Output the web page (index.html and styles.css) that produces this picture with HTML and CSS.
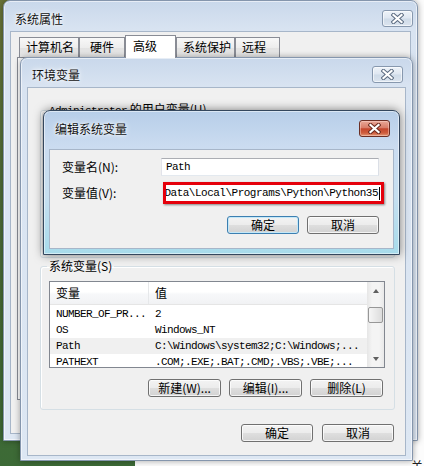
FILE: index.html
```html
<!DOCTYPE html>
<html lang="zh-CN">
<head>
<meta charset="utf-8">
<title>编辑系统变量</title>
<link rel="stylesheet" href="styles.css">
</head>
<body>
<div class="desktop">
  <div class="explorer"><span class="frag">关</span></div>

  <section class="win win-sys">
    <header class="titlebar">
      <span class="title">系统属性</span>
      <span class="close"><svg width="13" height="11" viewBox="0 0 13 11"><path d="M2.5 2 L10.5 9 M10.5 2 L2.5 9" stroke="#5b6b80" stroke-width="4.2" stroke-linecap="square"/><path d="M2.5 2 L10.5 9 M10.5 2 L2.5 9" stroke="#fff" stroke-width="2.2" stroke-linecap="square"/></svg></span>
    </header>
    <div class="client sys-client">
      <div class="tabs">
        <span class="tab t1">计算机名</span>
        <span class="tab t2">硬件</span>
        <span class="tab t3 selected">高级</span>
        <span class="tab t4">系统保护</span>
        <span class="tab t5">远程</span>
      </div>
      <div class="tabpanel"></div>
    </div>
  </section>

  <section class="win win-env">
    <header class="titlebar">
      <span class="title">环境变量</span>
      <span class="close"><svg width="13" height="11" viewBox="0 0 13 11"><path d="M2.5 2 L10.5 9 M10.5 2 L2.5 9" stroke="#5b6b80" stroke-width="4.2" stroke-linecap="square"/><path d="M2.5 2 L10.5 9 M10.5 2 L2.5 9" stroke="#fff" stroke-width="2.2" stroke-linecap="square"/></svg></span>
    </header>
    <div class="client env-client">
      <fieldset class="group group-user"><legend><span class="mono">Administrator</span> 的用户变量(U)</legend></fieldset>
      <fieldset class="group group-sys">
        <legend>系统变量(S)</legend>
        <div class="listbox">
          <div class="lv">
            <div class="lv-head"><span class="c1">变量</span><span class="c2">值</span></div>
            <div class="lv-rows">
              <div class="lv-row"><span class="c1 mono">NUMBER_OF_PR...</span><span class="c2 mono">2</span></div>
              <div class="lv-row"><span class="c1 mono">OS</span><span class="c2 mono">Windows_NT</span></div>
              <div class="lv-row hot"><span class="c1 mono">Path</span><span class="c2 mono">C:\Windows\system32;C:\Windows;...</span></div>
              <div class="lv-row"><span class="c1 mono">PATHEXT</span><span class="c2 mono">.COM;.EXE;.BAT;.CMD;.VBS;.VBE;...</span></div>
            </div>
          </div>
          <div class="vscroll">
            <span class="sb-btn"><i class="tri up"></i></span>
            <span class="sb-track"><span class="thumb"></span></span>
            <span class="sb-btn"><i class="tri down"></i></span>
          </div>
        </div>
        <div class="btnrow group-btns">
          <button class="btn">新建(W)...</button>
          <button class="btn">编辑(I)...</button>
          <button class="btn">删除(L)</button>
        </div>
      </fieldset>
      <div class="btnrow env-btns">
        <button class="btn">确定</button>
        <button class="btn">取消</button>
      </div>
    </div>
  </section>

  <section class="win win-edit">
    <header class="titlebar">
      <span class="title">编辑系统变量</span>
      <span class="close close-active"><svg width="13" height="11" viewBox="0 0 13 11"><path d="M2.5 2 L10.5 9 M10.5 2 L2.5 9" stroke="#6b2a1e" stroke-width="4.2" stroke-linecap="square"/><path d="M2.5 2 L10.5 9 M10.5 2 L2.5 9" stroke="#fff" stroke-width="2.2" stroke-linecap="square"/></svg></span>
    </header>
    <div class="client edit-client">
      <div class="field">
        <label>变量名(N):</label>
        <div class="textbox mono">Path</div>
      </div>
      <div class="field">
        <label>变量值(V):</label>
        <div class="redmark">
          <div class="textbox val mono"><span>Data\Local\Programs\Python\Python35</span><i class="caret"></i></div>
        </div>
      </div>
      <div class="btnrow edit-btns">
        <button class="btn btn-default">确定</button>
        <button class="btn">取消</button>
      </div>
    </div>
  </section>
</div>
</body>
</html>
```

FILE: styles.css
```css
* { box-sizing: border-box; }
html, body { margin: 0; padding: 0; }
body {
  width: 424px; height: 466px; overflow: hidden;
  font-family: "Noto Sans CJK SC", "Noto Sans", sans-serif;
  font-size: 12px; color: #000; background: #3e6a36;
}
.desktop {
  position: relative; width: 424px; height: 466px; overflow: hidden;
  background: linear-gradient(180deg, #6a7438 0%, #4f6d37 40%, #3c6a36 100%);
}
.explorer { position: absolute; left: 135px; top: 0; right: 0; bottom: 0; background: #fcfcfc; }
.frag { position: absolute; right: 1px; bottom: -8px; font-size: 12px; line-height: 16px; color: #222; }
.mono { font-family: "Liberation Mono", "DejaVu Sans Mono", monospace; font-size: 11px; letter-spacing: -0.6px; }

/* windows */
.win {
  position: absolute; display: flex; flex-direction: column;
  border: 1px solid #8596ad; border-radius: 7px 7px 0 0;
  background: linear-gradient(180deg, #c9d8eb 0, #d8e3f1 28px, #dde7f3 100%);
  box-shadow: 0 0 6px rgba(0,0,0,.35), inset 0 0 0 1px rgba(255,255,255,.55);
}
.titlebar { display: flex; align-items: flex-start; justify-content: space-between; flex: none; }
.title { line-height: 16px; font-size: 12px; color: #111; text-shadow: 0 0 6px #fff, 0 0 3px #fff; }
.close {
  width: 31px; height: 17px; margin-top: -1px; display: flex; align-items: center; justify-content: center;
  border: 1px solid #8798ae; border-radius: 3px;
  background: linear-gradient(180deg, #eef3f9 0%, #dfe7f1 48%, #cfdbe8 52%, #dbe4ef 100%);
  box-shadow: inset 0 0 0 1px rgba(255,255,255,.6);
}
.close-active {
  border-color: #6b2e24;
  background: linear-gradient(180deg, #e9a898 0%, #d97d69 45%, #c4462d 52%, #cf5d3d 80%, #e49a78 100%);
  box-shadow: inset 0 0 0 1px rgba(255,220,210,.45);
}
.client { flex: 1; background: #f0f0f0; box-shadow: 0 0 0 1px #a7b6c9; display: flex; flex-direction: column; }

/* system properties */
.win-sys { left: 3px; top: 0; width: 415px; height: 441px; }
.win-sys .titlebar { height: 31px; padding: 10px 4px 0 11px; }
.sys-client { margin: 0 7px 7px; padding: 3px 6px 33px 6px; }
.tabs { display: flex; align-items: flex-end; height: 22px; margin-left: 2px; flex: none; }
.tab {
  height: 20px; border: 1px solid #898c95; border-bottom: none; padding-left: 6px; line-height: 18px;
  background: linear-gradient(180deg, #f8f8f8 0%, #ededed 50%, #e2e2e2 52%, #e9e9e9 100%);
  white-space: nowrap;
}
.t1 { width: 60px; }
.t2 { width: 46px; padding-left: 10px; }
.t3 { width: 51px; padding-left: 7px; }
.t4 { width: 59px; }
.t5 { width: 45px; }
.tab.selected { height: 23px; margin-bottom: -1px; background: #fff; position: relative; z-index: 1; padding-top: 1px; }
.tabpanel { flex: 1; border: 1px solid #898c95; background: #fff; }

/* environment variables */
.win-env { left: 20px; top: 57px; width: 393px; height: 404px; }
.win-env .titlebar { height: 30px; padding: 9px 9px 0 11px; }
.env-client { margin: 0 7px 5px; padding: 13px 10px 0 12px; }

.group {
  margin: 0; min-width: 0; border: 1px solid #d5dfe5; border-radius: 3px;
  padding: 0 9px 12px 8px; box-shadow: inset 1px 1px 0 #fff;
}
.group legend { padding: 0 2px; margin-left: -2px; line-height: 16px; }
.group-user { height: 157px; flex: none; }
.group-sys { padding-top: 7px; flex: none; }

.listbox { display: flex; height: 87px; border: 1px solid #828790; background: #fff; overflow: hidden; }
.lv { flex: 1; min-width: 0; display: flex; flex-direction: column; }
.lv-head {
  display: flex; height: 23px; flex: none; align-items: stretch;
  border-bottom: 1px solid #e5e5e5;
  background: linear-gradient(180deg, #fff 0%, #fff 45%, #f7f8fa 55%, #f1f2f4 100%);
}
.lv-head span { display: flex; align-items: center; line-height: 16px; }
.c1 { width: 99px; flex: none; padding-left: 6px; overflow: hidden; white-space: nowrap; }
.c2 { flex: 1; min-width: 0; padding-left: 6px; overflow: hidden; white-space: nowrap; }
.lv-head .c1 { border-right: 1px solid #e6e8ea; }
.lv-rows { padding-top: 1px; }
.lv-row { display: flex; height: 16px; line-height: 16px; }
.lv-row.hot { background: #f0f0f0; }

.vscroll {
  width: 17px; flex: none; display: flex; flex-direction: column;
  background: linear-gradient(90deg, #e6e6e6, #f4f4f4 30%, #f4f4f4 70%, #e9e9e9);
}
.sb-btn { height: 17px; flex: none; display: flex; align-items: center; justify-content: center; }
.sb-track { flex: 1; padding-top: 8px; display: flex; flex-direction: column; align-items: center; }
.thumb {
  display: block; width: 15px; height: 16px; border: 1px solid #979797; border-radius: 2px;
  background: linear-gradient(90deg, #f6f6f6, #e9e9e9 50%, #dcdcdc);
}
.tri { display: block; width: 0; height: 0; border-left: 3.5px solid transparent; border-right: 3.5px solid transparent; }
.tri.up { border-bottom: 4px solid #606060; }
.tri.down { border-top: 4px solid #606060; }

.btnrow { display: flex; justify-content: flex-end; flex: none; }
.btn {
  width: 73px; height: 18px; padding: 0; margin: 0;
  border: 1px solid #707070; border-radius: 3px;
  background: linear-gradient(180deg, #f3f3f3 0%, #ececec 48%, #dedede 52%, #d2d2d2 100%);
  box-shadow: inset 0 0 0 1px rgba(255,255,255,.75);
  font: 12px/16px "Noto Sans CJK SC", "Noto Sans", sans-serif; color: #000;
}
.group-btns { margin-top: 11px; gap: 8px; padding-right: 2px; }
.env-btns { margin-top: 14px; gap: 9px; margin-right: 1px; }
.env-btns .btn, .edit-btns .btn { width: 72px; }

/* edit dialog */
.win-edit {
  left: 43px; top: 110px; width: 357px; height: 145px;
  border-color: #34475e;
  background: linear-gradient(180deg, #b7cee9 0, #cbdcf0 36px, #c6dff0 60%, #a7dbeb 100%);
  box-shadow: 0 0 10px rgba(0,0,0,.5), inset 0 0 0 1px rgba(255,255,255,.5);
}
.win-edit .titlebar { height: 39px; padding: 10px 9px 0 11px; }
.edit-client { margin: 0 6px 6px; padding: 8px 14px 0 12px; }
.field { display: flex; align-items: center; }
.field label { width: 99px; flex: none; line-height: 16px; }
.field + .field { margin-top: 6px; }
.textbox {
  width: 221px; height: 18px; border: 1px solid; border-color: #abadb3 #dbdfe6 #e3e9ef #e2e3ea;
  background: #fff; padding-left: 4px; line-height: 16px; white-space: nowrap; overflow: hidden;
}
.redmark {
  margin-left: 2px; width: 221px; height: 22px; border: 3px solid #e5000b;
  box-shadow: 1px 1px 2px rgba(0,0,0,.45); background: #fff;
}
.textbox.val {
  width: 100%; height: 16px; border: none; padding: 0 1px 0 0;
  display: flex; align-items: center; justify-content: flex-end; letter-spacing: -0.5px;
}
.val span { flex: none; }
.caret { display: block; flex: none; width: 1px; height: 13px; background: #000; margin-left: 1px; }
.edit-btns { margin-top: 12px; gap: 8px; }
.btn-default { border-color: #3c7fb1; box-shadow: inset 0 0 0 1px #c4e8f8; }
```
